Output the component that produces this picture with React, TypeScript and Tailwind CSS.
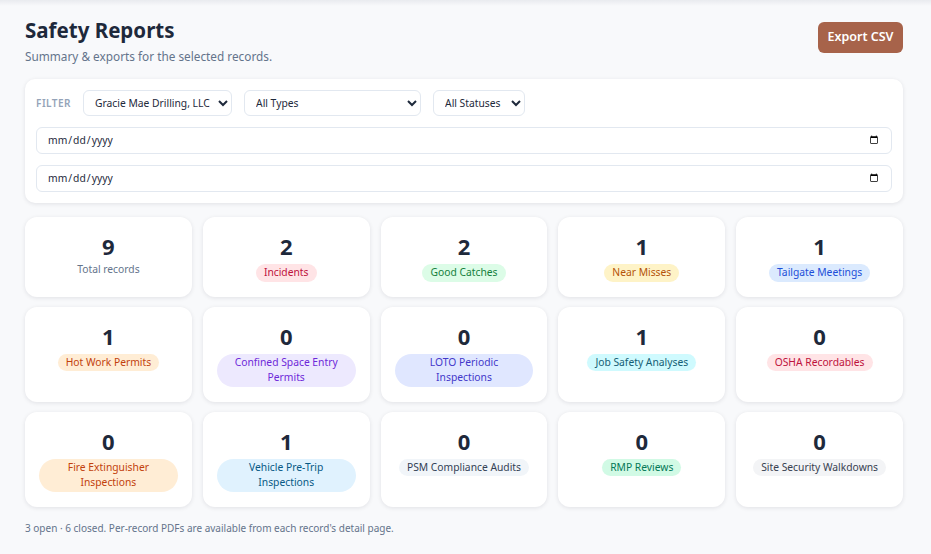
import React from "react";

// ─── Data ─────────────────────────────────────────────────────────────────────

type Stat = { count: number; label: string; badge?: string };

const STATS: Stat[] = [
  { count: 9, label: "Total records" },
  { count: 2, label: "Incidents", badge: "bg-[#ffe4e6] text-[#be123c]" },
  { count: 2, label: "Good Catches", badge: "bg-[#dcfce7] text-[#15803d]" },
  { count: 1, label: "Near Misses", badge: "bg-[#fef3c7] text-[#b45309]" },
  { count: 1, label: "Tailgate Meetings", badge: "bg-[#dbeafe] text-[#1d4ed8]" },
  { count: 1, label: "Hot Work Permits", badge: "bg-[#ffedd5] text-[#c2410c]" },
  { count: 0, label: "Confined Space Entry Permits", badge: "bg-[#ede9fe] text-[#6d28d9]" },
  { count: 0, label: "LOTO Periodic Inspections", badge: "bg-[#e0e7ff] text-[#4338ca]" },
  { count: 1, label: "Job Safety Analyses", badge: "bg-[#cffafe] text-[#155e75]" },
  { count: 0, label: "OSHA Recordables", badge: "bg-[#ffe4e6] text-[#be123c]" },
  { count: 0, label: "Fire Extinguisher Inspections", badge: "bg-[#ffedd5] text-[#c2410c]" },
  { count: 1, label: "Vehicle Pre-Trip Inspections", badge: "bg-[#e0f2fe] text-[#075985]" },
  { count: 0, label: "PSM Compliance Audits", badge: "bg-[#f1f5f9] text-[#334155]" },
  { count: 0, label: "RMP Reviews", badge: "bg-[#d1fae5] text-[#047857]" },
  { count: 0, label: "Site Security Walkdowns", badge: "bg-[#f3f4f6] text-[#374151]" },
];

// ─── Stat card ────────────────────────────────────────────────────────────────

function StatCard({ stat }: { stat: Stat }) {
  return (
    <div className="bg-white rounded-xl shadow-[0_1px_4px_rgba(15,23,42,0.10)] px-[14px] pt-[14px] pb-[15px] flex flex-col items-center text-center">
      <div className="text-[22px] font-bold leading-[30px] text-[#1e293b]">
        {stat.count}
      </div>
      {stat.badge ? (
        <span
          className={`mt-[3px] inline-block rounded-full px-2 py-[1px] text-[10.3px] leading-[15.5px] ${stat.badge}`}
        >
          {stat.label}
        </span>
      ) : (
        <span className="mt-[1px] text-[10.3px] leading-[15px] text-[#64748b]">
          {stat.label}
        </span>
      )}
    </div>
  );
}

// ─── Page ─────────────────────────────────────────────────────────────────────

export default function App() {
  return (
    <div
      className="min-h-[554px] bg-[#f8f9fb] text-[#1e293b] relative"
      style={{ fontFamily: '"Noto Sans", "Open Sans", sans-serif' }}
    >
      {/* faint shadow from the bar above */}
      <div className="absolute inset-x-0 top-0 h-[6px] bg-gradient-to-b from-[#e9ebef] to-transparent" />

      <div className="pl-[25px] pr-[28px] pt-[15px] pb-[20px]">
        {/* Header */}
        <div className="flex items-start justify-between">
          <div>
            <h1 className="text-[20.5px] font-bold leading-[30px] text-[#1e293b]">
              Safety Reports
            </h1>
            <p className="mt-[2px] text-[11.8px] leading-[18px] text-[#64748b]">
              Summary &amp; exports for the selected records.
            </p>
          </div>
          <button className="mt-[7px] h-[31px] w-[85px] rounded-md bg-[#a7634a] text-white text-[12.5px] font-semibold">
            Export CSV
          </button>
        </div>

        {/* Filters */}
        <div className="mt-[14px] bg-white rounded-[10px] shadow-[0_1px_4px_rgba(15,23,42,0.10)] px-[11px] pt-[11px] pb-[11px] flex flex-col gap-[11px]">
          <div className="flex items-center gap-[12px]">
            <span className="text-[10px] font-semibold tracking-wider text-[#94a3b8]">
              FILTER
            </span>
            <select className="h-[26px] w-[149px] rounded-md border border-[#e2e8f0] bg-white pl-[7px] pr-1 text-[10.3px] text-[#1e293b]">
              <option>Gracie Mae Drilling, LLC</option>
            </select>
            <select className="h-[26px] w-[177px] rounded-md border border-[#e2e8f0] bg-white pl-[7px] pr-1 text-[10.3px] text-[#1e293b]">
              <option>All Types</option>
            </select>
            <select className="h-[26px] w-[92px] rounded-md border border-[#e2e8f0] bg-white pl-[7px] pr-1 text-[10.3px] text-[#1e293b]">
              <option>All Statuses</option>
            </select>
          </div>
          <input
            type="date"
            className="h-[27px] w-full rounded-md border border-[#e2e8f0] bg-white px-[10px] text-[10.3px] text-[#1e293b]"
          />
          <input
            type="date"
            className="h-[27px] w-full rounded-md border border-[#e2e8f0] bg-white px-[10px] text-[10.3px] text-[#1e293b]"
          />
        </div>

        {/* Stat grid */}
        <div className="mt-[14px] grid grid-cols-5 gap-x-[11px] gap-y-[10px]">
          {STATS.map((s) => (
            <StatCard key={s.label} stat={s} />
          ))}
        </div>

        <p className="mt-[14px] text-[10px] text-[#64748b]">
          3 open · 6 closed. Per-record PDFs are available from each record's
          detail page.
        </p>
      </div>
    </div>
  );
}
